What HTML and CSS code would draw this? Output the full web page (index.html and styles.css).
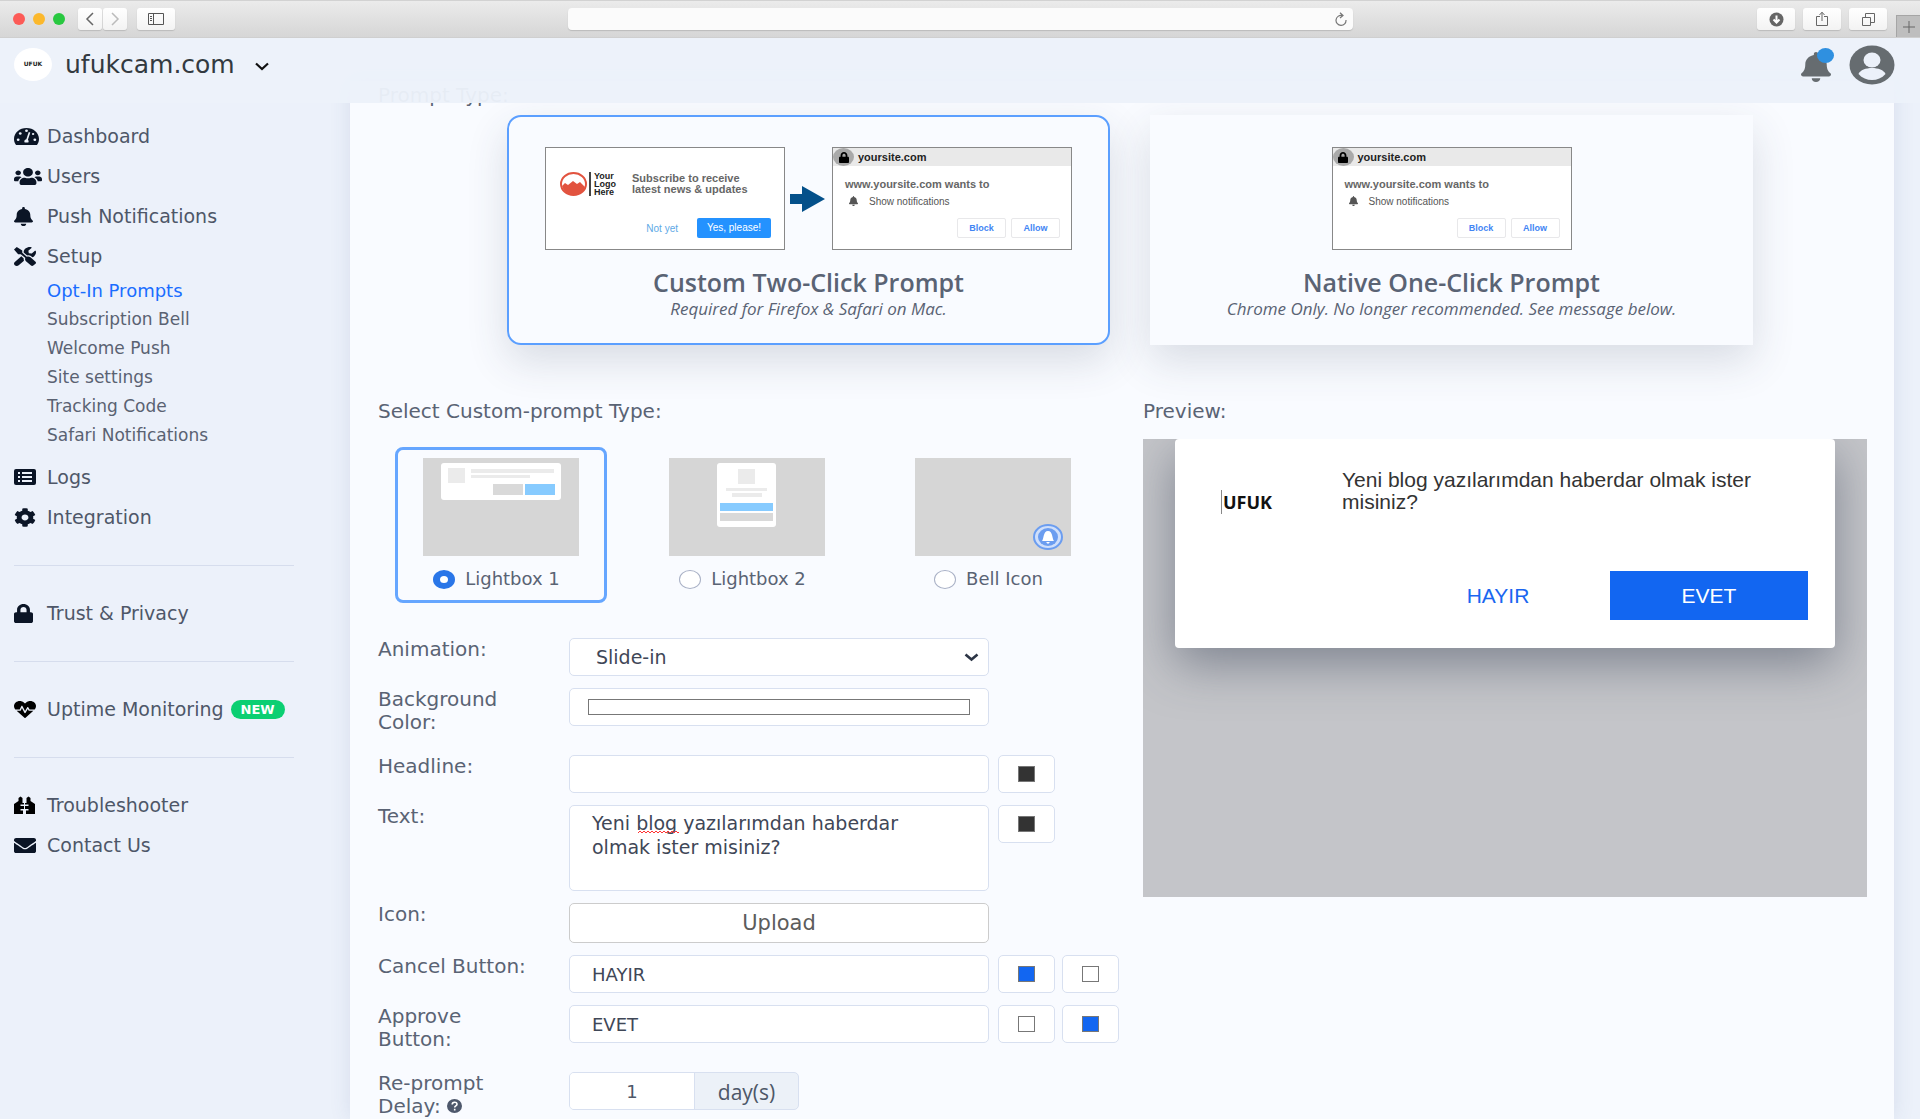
FILE: index.html
```html
<!DOCTYPE html>
<html lang="en">
<head>
<meta charset="utf-8">
<title>Opt-In Prompts</title>
<link rel="stylesheet" href="styles.css">
</head>
<body>
<svg class="sprite" aria-hidden="true">
  <symbol id="bell" viewBox="0 0 448 512" preserveAspectRatio="none"><path d="M224 512c35.32 0 63.97-28.65 63.97-64H160.03c0 35.35 28.65 64 63.97 64zm215.39-149.71c-19.32-20.76-55.47-51.99-55.47-154.29 0-77.7-54.48-139.9-127.94-155.16V32c0-17.67-14.32-32-31.98-32s-31.98 14.33-31.98 32v20.84C118.56 68.1 64.08 130.3 64.08 208c0 102.3-36.15 133.53-55.47 154.29-6 6.45-8.66 14.16-8.61 21.71.11 16.4 12.98 32 32.1 32h383.8c19.12 0 32-15.6 32.1-32 .05-7.55-2.61-15.27-8.61-21.71z"/></symbol>
  <symbol id="lock" viewBox="0 0 448 512" preserveAspectRatio="none"><path d="M400 224h-24v-72C376 68.2 307.8 0 224 0S72 68.2 72 152v72H48c-26.5 0-48 21.5-48 48v192c0 26.5 21.5 48 48 48h352c26.5 0 48-21.5 48-48V272c0-26.5-21.5-48-48-48zm-104 0H152v-72c0-39.7 32.3-72 72-72s72 32.3 72 72v72z"/></symbol>
</svg>

<div class="browser">
  <span class="light red"></span><span class="light amber"></span><span class="light green"></span>
  <div class="history">
    <button class="tool half" aria-label="Back"><svg width="10" height="14" viewBox="0 0 10 14"><path d="M8 1 2 7l6 6" fill="none" stroke="#666" stroke-width="1.500"/></svg></button>
    <button class="tool half" aria-label="Forward"><svg width="10" height="14" viewBox="0 0 10 14"><path d="m2 1 6 6-6 6" fill="none" stroke="#bbb" stroke-width="1.500"/></svg></button>
  </div>
  <button class="tool" aria-label="Show sidebar"><svg width="16" height="12" viewBox="0 0 16 12"><path d="M.5.5h15v11H.5zM5.500.5v11M2 3.500h2M2 5.500h2M2 7.500h2" fill="none" stroke="#555"/></svg></button>
  <div class="address"><input type="text" aria-label="Address"><svg class="reload" width="12" height="14" viewBox="0 0 12 14"><path d="M7 3.500A5 5 0 1 0 11 8M5 .8 8 3.500 5 6" fill="none" stroke="#777" stroke-width="1.200"/></svg></div>
  <div class="tools">
    <button class="tool" aria-label="Downloads"><svg width="15" height="15" viewBox="0 0 15 15"><circle cx="7.500" cy="7.500" r="7" fill="#666"/><path d="M7.500 3.500v6M4.500 7.500l3 3 3-3" fill="none" stroke="#fff" stroke-width="2"/></svg></button>
    <button class="tool" aria-label="Share"><svg width="12" height="16" viewBox="0 0 12 16"><path d="M4 5.500H.5v9h11v-9H8M6 10V1.500M3.500 4 6 1.200 8.500 4" fill="none" stroke="#666"/></svg></button>
    <button class="tool" aria-label="Tabs"><svg width="13" height="13" viewBox="0 0 13 13"><path d="M.5 4.500h8v8h-8zM3.500 4V.5h9v9H9" fill="none" stroke="#666"/></svg></button>
  </div>
  <button class="new-tab" aria-label="New tab"><svg width="12" height="12" viewBox="0 0 12 12"><path d="M6 0v12M0 6h12" stroke="#666" fill="none"/></svg></button>
</div>

<header class="topbar">
  <span class="avatar">UFUK</span>
  <span class="site">ufukcam.com</span>
  <svg class="caret" width="16" height="9" viewBox="0 0 16 9"><path d="m2 1.500 6 5.500 6-5.500" fill="none" stroke="#111" stroke-width="2.200"/></svg>
  <div class="account">
    <div class="alerts"><svg width="30" height="30" fill="#666c70"><use href="#bell"/></svg><span class="dot"></span></div>
    <svg width="46" height="40" viewBox="0 0 46 40" preserveAspectRatio="none"><ellipse cx="23" cy="20" rx="22.500" ry="19.500" fill="#666c70"/><ellipse cx="23" cy="15" rx="8.500" ry="7.500" fill="#ecf1fa"/><path d="M9.500 29c3-8 24-8 27 0-7 8-20 8-27 0z" fill="#ecf1fa"/></svg>
  </div>
</header>

<div class="layout">
<nav class="sidebar">
  <a class="item" href="#"><span class="icon"><svg width="25" height="17" viewBox="0 32 576 448" preserveAspectRatio="none"><path d="M288 32C128.940 32 0 160.940 0 320c0 52.800 14.250 102.260 39.060 144.800 5.610 9.620 16.300 15.200 27.440 15.200h443c11.140 0 21.830-5.580 27.440-15.200C561.750 422.260 576 372.800 576 320c0-159.060-128.940-288-288-288z"/><g fill="#ecf1fa"><circle cx="288" cy="106" r="32"/><circle cx="144" cy="176" r="32"/><circle cx="96" cy="340" r="32"/><circle cx="480" cy="340" r="32"/><circle cx="440" cy="190" r="28"/><path d="m340 140 36 12-56 190c20 20 22 50 10 74h-84c-20-36-4-82 38-90z"/></g></svg></span>Dashboard</a>
  <a class="item" href="#"><span class="icon"><svg width="28" height="17" viewBox="0 32 640 448" preserveAspectRatio="none"><path d="M96 224c35.300 0 64-28.700 64-64s-28.700-64-64-64-64 28.700-64 64 28.700 64 64 64zm448 0c35.300 0 64-28.700 64-64s-28.700-64-64-64-64 28.700-64 64 28.700 64 64 64zm32 32h-64c-17.600 0-33.500 7.100-45.100 18.600 40.300 22.100 68.900 62 75.100 109.400h66c17.700 0 32-14.300 32-32v-32c0-35.300-28.700-64-64-64zm-256 0c61.900 0 112-50.100 112-112S381.900 32 320 32 208 82.100 208 144s50.100 112 112 112zm76.800 32h-8.300c-20.800 10-43.900 16-68.500 16s-47.600-6-68.500-16h-8.300C179.600 288 128 339.600 128 403.200V432c0 26.500 21.500 48 48 48h288c26.500 0 48-21.500 48-48v-28.800c0-63.600-51.600-115.200-115.200-115.200zm-223.700-13.400C161.500 263.100 145.600 256 128 256H64c-35.300 0-64 28.700-64 64v32c0 17.700 14.300 32 32 32h65.900c6.300-47.400 34.900-87.300 75.200-109.400z"/></svg></span>Users</a>
  <a class="item" href="#"><span class="icon"><svg width="19" height="19"><use href="#bell"/></svg></span>Push Notifications</a>
  <a class="item" href="#"><span class="icon"><svg width="22" height="19" viewBox="0 0 512 512" preserveAspectRatio="none"><path d="M501.100 395.700L384 278.600c-23.100-23.100-57.600-27.600-85.400-13.900L192 158.100V96L64 0 0 64l96 128h62.100l106.600 106.600c-13.600 27.800-9.200 62.300 13.900 85.400l117.100 117.100c14.600 14.600 38.200 14.600 52.700 0l52.700-52.700c14.500-14.600 14.500-38.200 0-52.700zM331.700 225c28.300 0 54.900 11 74.900 31l19.400 19.400c15.800-6.900 30.800-16.500 43.800-29.500 37.100-37.100 49.700-89.300 37.900-136.700-2.200-9-13.500-12.100-20.100-5.500l-74.400 74.400-67.900-11.300L334 98.900l74.400-74.400c6.600-6.600 3.400-17.900-5.700-20.200-47.400-11.700-99.600.9-136.600 37.900-28.500 28.500-41.900 66.100-41.200 103.600l82.100 82.100c8.100-1.900 16.500-2.900 24.700-2.900zm-103.900 82l-56.700-56.700L18.700 402.800c-25 25-25 65.500 0 90.500s65.500 25 90.500 0l123.600-123.600c-7.600-19.900-9.900-41.600-5-62.700z"/></svg></span>Setup</a>
  <div class="submenu">
    <a class="current" href="#">Opt-In Prompts</a>
    <a href="#">Subscription Bell</a>
    <a href="#">Welcome Push</a>
    <a href="#">Site settings</a>
    <a href="#">Tracking Code</a>
    <a href="#">Safari Notifications</a>
  </div>
  <a class="item" href="#"><span class="icon"><svg width="22" height="16" viewBox="0 0 22 16"><rect width="22" height="16" rx="2"/><path d="M4 4h2M8 4h10M4 8h2M8 8h10M4 12h2M8 12h10" stroke="#ecf1fa" stroke-width="2"/></svg></span>Logs</a>
  <a class="item" href="#"><span class="icon"><svg width="22" height="19" viewBox="0 0 512 512" preserveAspectRatio="none"><path d="M487.400 315.700l-42.600-24.600c4.300-23.200 4.300-47 0-70.200l42.600-24.600c4.900-2.800 7.100-8.600 5.500-14-11.100-35.600-30-67.800-54.700-94.600-3.800-4.100-10-5.100-14.800-2.300L380.800 110c-17.900-15.400-38.500-27.300-60.800-35.100V25.800c0-5.600-3.900-10.500-9.400-11.700-36.700-8.200-74.300-7.800-109.200 0-5.500 1.200-9.400 6.100-9.400 11.700V75c-22.200 7.900-42.800 19.800-60.800 35.100L88.700 85.500c-4.900-2.800-11-1.900-14.800 2.300-24.700 26.700-43.600 58.900-54.700 94.600-1.700 5.400.6 11.200 5.500 14L67.300 221c-4.300 23.200-4.300 47 0 70.200l-42.600 24.600c-4.900 2.800-7.100 8.600-5.500 14 11.100 35.600 30 67.800 54.700 94.600 3.800 4.100 10 5.100 14.800 2.300l42.600-24.600c17.900 15.400 38.500 27.300 60.800 35.100v49.200c0 5.600 3.900 10.500 9.400 11.700 36.700 8.200 74.300 7.800 109.200 0 5.500-1.200 9.400-6.100 9.400-11.700v-49.200c22.200-7.900 42.800-19.800 60.800-35.100l42.600 24.600c4.900 2.800 11 1.900 14.800-2.300 24.700-26.700 43.600-58.900 54.700-94.600 1.500-5.500-.7-11.300-5.600-14.100zM256 336c-44.100 0-80-35.900-80-80s35.900-80 80-80 80 35.900 80 80-35.900 80-80 80z"/></svg></span>Integration</a>
  <hr>
  <a class="item" href="#"><span class="icon"><svg width="19" height="19"><use href="#lock"/></svg></span>Trust &amp; Privacy</a>
  <hr>
  <a class="item" href="#"><span class="icon"><svg class="black" width="22" height="17" viewBox="0 32 512 448" preserveAspectRatio="none"><path d="M320.200 243.800l-49.700 99.400c-6 12.100-23.400 11.700-28.900-.6l-56.900-126.300-30 71.700H60.600l182.500 186.500c7.100 7.300 18.600 7.300 25.700 0L451.400 288H342.300l-22.100-44.200zM473.700 73.900l-2.400-2.500c-51.500-52.600-135.800-52.600-187.400 0L256 100l-27.900-28.500c-51.500-52.700-135.900-52.700-187.400 0l-2.400 2.400C-10.400 123.700-12.500 203 31 256h102.400l35.900-86.200c5.400-12.900 23.600-13.100 29.300-.4l58.200 129.300 49-97.900c5.900-11.800 22.700-11.800 28.600 0l27.600 55.200H481c43.500-53 41.400-132.300-7.300-182.100z"/></svg></span>Uptime Monitoring<span class="badge">NEW</span></a>
  <hr>
  <a class="item" href="#"><span class="icon"><svg class="black" width="21" height="18" viewBox="0 0 21 18"><path d="M4.500 2 6.500.5 8.500 2v5H10v1.500H6.500v1.500H10v3H6.500v1.500H9V18H0V8l4.500-3zM16.500 2l-2-1.500-2 1.500v5H11v1.500h3.500v1.500H11v3h3.500v1.500H12V18h9V8l-4.500-3z"/></svg></span>Troubleshooter</a>
  <a class="item" href="#"><span class="icon"><svg width="22" height="15" viewBox="0 64 512 384" preserveAspectRatio="none"><path d="M502.300 190.800c3.900-3.100 9.700-.2 9.700 4.700V400c0 26.500-21.500 48-48 48H48c-26.500 0-48-21.500-48-48V195.600c0-5 5.700-7.800 9.700-4.700 22.400 17.400 52.100 39.500 154.100 113.600 21.100 15.400 56.700 47.800 92.200 47.600 35.700.3 72-32.800 92.300-47.600 102-74.100 131.600-96.300 154-113.700zM256 320c23.200.4 56.600-29.200 73.400-41.400 132.700-96.300 142.800-104.700 173.400-128.700 5.800-4.500 9.200-11.500 9.200-18.900v-19c0-26.500-21.500-48-48-48H48c-26.500 0-48 21.500-48 48v19c0 7.400 3.400 14.300 9.200 18.900 30.600 23.900 40.700 32.400 173.400 128.700 16.800 12.200 50.200 41.800 73.400 41.400z"/></svg></span>Contact Us</a>
</nav>

<main class="panel">
  <p class="label">Prompt Type:</p>
  <div class="prompts">
    <section class="prompt selected">
      <div class="mocks">
        <div class="mock subscribe">
          <div class="pitch">
            <svg width="27" height="24" viewBox="0 0 27 24"><ellipse cx="13.500" cy="12" rx="12.500" ry="11" fill="#fff" stroke="#e2533f" stroke-width="2"/><path d="m2 14 3-3 3 2 5-4 4 3 3-2 5 5c-2 10-20 11-23-1z" fill="#e2533f"/></svg>
            <strong class="your-logo">Your<br>Logo<br>Here</strong>
            <strong class="words">Subscribe to receive<br>latest news &amp; updates</strong>
          </div>
          <div class="choices"><span class="not-yet">Not yet</span><span class="yes">Yes, please!</span></div>
        </div>
        <svg class="arrow" width="35" height="26" viewBox="0 0 35 26"><path d="M0 8h12V0l23 13-23 13v-8H0z" fill="#04508a"/></svg>
        <div class="mock native">
          <div class="host"><span class="secure"><svg width="10" height="11"><use href="#lock"/></svg></span>yoursite.com</div>
          <strong class="wants">www.yoursite.com wants to</strong>
          <div class="show"><svg width="9" height="10" fill="#555"><use href="#bell"/></svg>Show notifications</div>
          <div class="answers"><span>Block</span><span>Allow</span></div>
        </div>
      </div>
      <h2>Custom Two-Click Prompt</h2>
      <em>Required for Firefox &amp; Safari on Mac.</em>
    </section>
    <section class="prompt">
      <div class="mocks single">
        <div class="mock native">
          <div class="host"><span class="secure"><svg width="10" height="11"><use href="#lock"/></svg></span>yoursite.com</div>
          <strong class="wants">www.yoursite.com wants to</strong>
          <div class="show"><svg width="9" height="10" fill="#555"><use href="#bell"/></svg>Show notifications</div>
          <div class="answers"><span>Block</span><span>Allow</span></div>
        </div>
      </div>
      <h2>Native One-Click Prompt</h2>
      <em>Chrome Only. No longer recommended. See message below.</em>
    </section>
  </div>

  <div class="columns">
    <form class="settings">
      <p class="label">Select Custom-prompt Type:</p>
      <div class="types">
        <label class="type selected">
          <svg width="156" height="98" viewBox="0 0 156 98"><path fill="#d6d6d6" d="M0 0h156v98H0z"/><rect x="18" y="5" width="120" height="37" rx="3" fill="#fff"/><path fill="#ebebeb" d="M25 10h17v15H25zM48 11h83v4H48zM48 17h59v3H48z"/><path fill="#d9d9d9" d="M70 26h30v11H70z"/><path fill="#87cbff" d="M102 26h30v11h-30z"/></svg>
          <span><input type="radio" name="type" checked>Lightbox 1</span>
        </label>
        <label class="type">
          <svg width="156" height="98" viewBox="0 0 156 98"><path fill="#d6d6d6" d="M0 0h156v98H0z"/><rect x="48" y="5" width="59" height="64" rx="3" fill="#fff"/><path fill="#ebebeb" d="M69 11h17v15H69zM57 30h41v3H57zM63 35h30v4H63z"/><path fill="#87cbff" d="M51 45h53v8H51z"/><path fill="#d9d9d9" d="M51 55h53v8H51z"/></svg>
          <span><input type="radio" name="type">Lightbox 2</span>
        </label>
        <label class="type">
          <svg width="156" height="98" viewBox="0 0 156 98"><path fill="#d6d6d6" d="M0 0h156v98H0z"/><ellipse cx="133" cy="79" rx="14" ry="12" fill="#cfdffb" stroke="#6b9df0" stroke-width="2"/><ellipse cx="133" cy="79" rx="10" ry="9" fill="#6b9df0"/><path d="M127 83c2-2 1-10 6-10s4 8 6 10zM131 84h4l-2 2z" fill="#fff"/></svg>
          <span><input type="radio" name="type">Bell Icon</span>
        </label>
      </div>

      <div class="row">
        <label for="animation">Animation:</label>
        <div class="select"><select id="animation" class="field"><option>Slide-in</option></select><svg width="15" height="9" viewBox="0 0 15 9"><path d="m1.500 1.500 6 5 6-5" fill="none" stroke="#2c3545" stroke-width="2.600"/></svg></div>
      </div>
      <div class="row tall">
        <label for="background">Background<br>Color:</label>
        <input id="background" class="field color wide" type="color" value="#ffffff">
      </div>
      <div class="row">
        <label for="headline">Headline:</label>
        <input id="headline" class="field" type="text">
        <input class="color" type="color" value="#333333" aria-label="Headline color">
      </div>
      <div class="row">
        <label for="text">Text:</label>
        <div class="message"><textarea id="text" class="field" spellcheck="false">Yeni blog yazılarımdan haberdar olmak ister misiniz?</textarea><svg class="typo" width="43" height="4" viewBox="0 0 43 4"><path d="m0 3 2-2 2 2 2-2 2 2 2-2 2 2 2-2 2 2 2-2 2 2 2-2 2 2 2-2 2 2 2-2 2 2 2-2 2 2 2-2 2 2 1-1" fill="none" stroke="#f33"/></svg></div>
        <input class="color" type="color" value="#333333" aria-label="Text color">
      </div>
      <div class="row">
        <label for="upload">Icon:</label>
        <button id="upload" class="upload" type="button">Upload</button>
      </div>
      <div class="row">
        <label for="cancel">Cancel Button:</label>
        <input id="cancel" class="field caps" type="text" value="HAYIR">
        <input class="color" type="color" value="#1266f1" aria-label="Cancel text color">
        <input class="color" type="color" value="#ffffff" aria-label="Cancel background">
      </div>
      <div class="row tall">
        <label for="approve">Approve<br>Button:</label>
        <input id="approve" class="field caps" type="text" value="EVET">
        <input class="color" type="color" value="#ffffff" aria-label="Approve text color">
        <input class="color" type="color" value="#1266f1" aria-label="Approve background">
      </div>
      <div class="row last">
        <label for="delay">Re-prompt<br>Delay: <svg width="15" height="14" viewBox="0 0 15 14"><ellipse cx="7.500" cy="7" rx="7.500" ry="7" fill="#4e586c"/><path d="M5.200 5.500c0-3 4.800-3 4.800-.3 0 1.800-2.300 1.600-2.300 3.300M7.700 9.800v1.700" fill="none" stroke="#fff" stroke-width="1.600"/></svg></label>
        <div class="delay"><input id="delay" type="text" value="1"><span>day(s)</span></div>
      </div>
    </form>

    <section class="preview">
      <p class="label">Preview:</p>
      <div class="stage">
        <div class="popup">
          <div class="popup-body">
            <div class="brand"><span>UFUK</span></div>
            <p>Yeni blog yazılarımdan haberdar olmak ister misiniz?</p>
          </div>
          <div class="popup-actions">
            <button class="deny">HAYIR</button>
            <button class="accept">EVET</button>
          </div>
        </div>
      </div>
    </section>
  </div>
</main>
</div>
</body>
</html>
```
FILE: styles.css
```css
* { box-sizing: border-box; }

body {
  display: flex;
  flex-direction: column;
  margin: 0;
  min-height: 100vh;
  background: #ecf1fa;
  color: #4e5768;
  font-family: "DejaVu Sans", sans-serif;
  font-size: 19px;
}

p, h2 { margin: 0; }
button, input, select, textarea { font: inherit; color: inherit; margin: 0; }
a { color: inherit; text-decoration: none; }
svg { flex: none; }
.sprite { position: absolute; width: 0; height: 0; }

/* Browser chrome */
.browser {
  display: flex;
  flex: none;
  align-items: center;
  height: 38px;
  padding-left: 13px;
  border-top: 1px solid #d2d2d2;
  border-bottom: 1px solid #cfcfcf;
  background: linear-gradient(#ebebeb, #d6d6d6);
}
.light { width: 12px; height: 12px; margin-right: 8px; border-radius: 50%; }
.red { background: #fc5b57; }
.amber { background: #fbb82c; }
.green { background: #28c840; }
.history { display: flex; gap: 1px; margin: 0 10px 0 5px; }
.tool {
  display: flex;
  align-items: center;
  justify-content: center;
  width: 38px;
  height: 22px;
  padding: 0;
  border: 0;
  border-radius: 3px;
  background: linear-gradient(#fff, #f3f3f3);
  box-shadow: 0 1px 1px #bbb;
}
.half { width: 24px; }
.address { position: relative; width: 785px; height: 22px; margin: 0 auto; }
.address input {
  display: block;
  width: 100%;
  height: 22px;
  border: 0;
  border-radius: 4px;
  background: #fbfbfb;
  box-shadow: 0 1px 1px #bbb;
}
.reload { position: absolute; right: 6px; top: 4px; }
.tools { display: flex; gap: 8px; margin: 0 9px 0 12px; }
.new-tab {
  align-self: flex-end;
  display: flex;
  align-items: center;
  justify-content: center;
  width: 24px;
  height: 22px;
  padding: 0;
  border: 1px solid #a5a5a5;
  border-width: 1px 0 0 1px;
  background: #bebebe;
}

/* Site header */
.topbar {
  position: relative;
  z-index: 2;
  display: flex;
  flex: none;
  align-items: center;
  height: 65px;
  padding: 0 25px 12px 14px;
  background: rgba(236, 241, 250, 0.96);
}
.avatar {
  width: 38px;
  height: 33px;
  margin-right: 13px;
  border-radius: 50%;
  background: #fff;
  color: #222;
  font: bold 6px/31px "DejaVu Sans", sans-serif;
  text-align: center;
}
.site { margin-right: 19px; color: #333a40; font-size: 25px; }
.caret { margin-top: 4px; }
.account { display: flex; align-items: center; gap: 18px; margin-left: auto; }
.alerts { position: relative; display: flex; padding-top: 4px; }
.dot {
  position: absolute;
  right: -3px;
  top: 0;
  width: 17px;
  height: 15px;
  border-radius: 50%;
  background: #2f90e0;
}

/* Sidebar */
.layout { display: flex; flex: 1; }
.sidebar { flex: none; width: 350px; padding: 13px 56px 40px 14px; }
.item { display: flex; align-items: center; height: 40px; white-space: nowrap; }
.icon { display: flex; flex: none; width: 33px; }
.sidebar svg { fill: #0b1526; }
.sidebar .black { fill: #000; }
.submenu { display: flex; flex-direction: column; margin-bottom: 7px; padding-left: 33px; }
.submenu a { color: #5a6272; font-size: 17px; line-height: 29px; }
.submenu .current { color: #1a6dff; font-size: 18px; }
.sidebar hr { height: 1px; margin: 28px 0 27px; border: 0; background: #d6dded; }
.badge {
  margin-left: 7px;
  padding: 0 10px;
  border-radius: 10px;
  background: #0bcf72;
  color: #fff;
  font: bold 13px/19px "DejaVu Sans", sans-serif;
}

/* Main panel slides under the header */
.panel {
  flex: 1;
  min-width: 0;
  margin: -22px 26px 0 0;
  padding: 3px 27px 0 28px;
  background: #f9fbff;
  box-shadow: 0 0 20px rgba(60, 80, 140, 0.12);
}
.label { color: #5a6374; font-size: 20px; line-height: 23px; }

.prompts { display: flex; gap: 40px; margin: 8px 114px 0 129px; }
.prompt {
  display: flex;
  flex: 1;
  flex-direction: column;
  align-items: center;
  height: 230px;
  padding: 30px 0 0;
  border: 2px solid transparent;
  background: #f9fbff;
  box-shadow: 0 16px 40px rgba(50, 60, 90, 0.16);
  color: #5a6374;
  font-family: "Open Sans", sans-serif;
}
.prompt.selected { border-color: #5b9fff; border-radius: 14px; }
.prompt h2 { margin-top: 15px; font-size: 25px; font-weight: 600; line-height: 34px; }
.prompt em { font-size: 17px; line-height: 20px; }
.mocks { display: flex; align-items: center; }
.arrow { margin: 0 7px 0 5px; }
.mock {
  width: 240px;
  height: 103px;
  border: 1px solid #888;
  background: #fff;
  font: 10px/11px "Liberation Sans", sans-serif;
}
.subscribe { padding: 24px 13px 0 14px; }
.pitch { display: flex; align-items: center; white-space: nowrap; }
.your-logo { margin: 0 16px 0 2px; padding-left: 3px; border-left: 2px solid #444; color: #222; font-size: 9px; line-height: 8px; }
.words { color: #666; font-size: 11px; }
.choices { display: flex; align-items: center; justify-content: flex-end; gap: 19px; margin-top: 22px; color: #5ea9e6; }
.yes { width: 74px; border-radius: 2px; background: #2492ff; color: #fff; line-height: 20px; text-align: center; }
.host { display: flex; align-items: center; gap: 4px; height: 18px; background: #e9e9e9; color: #222; font-size: 11px; font-weight: bold; }
.secure { display: flex; align-items: center; justify-content: center; width: 21px; height: 18px; border-radius: 50%; background: #a9a9a9; }
.wants { display: block; margin: 13px 0 6px 12px; color: #666; font-size: 11px; }
.show { display: flex; gap: 11px; margin-left: 16px; color: #555; }
.answers { display: flex; justify-content: flex-end; gap: 5px; margin: 11px 11px 0 0; color: #4285f4; font-size: 9px; font-weight: bold; }
.answers span { width: 49px; border: 1px solid #e8e8ea; border-radius: 2px; line-height: 18px; text-align: center; }

/* Form and preview columns */
.columns { display: grid; grid-template-columns: 765fr 724fr; margin-top: 55px; }
.types { display: flex; gap: 34px; margin: 24px 0 35px 17px; }
.type {
  display: flex;
  flex-direction: column;
  align-items: center;
  width: 212px;
  height: 156px;
  padding-top: 8px;
  border: 3px solid transparent;
  border-radius: 8px;
  color: #5a6374;
  font-size: 18px;
}
.type.selected { border-color: #66a6ff; }
.type span { display: flex; align-items: center; margin: 12px 9px 0 0; line-height: 22px; }
.type input {
  appearance: none;
  width: 22px;
  height: 19px;
  margin-right: 10px;
  border: 1px solid #a9b1c6;
  border-radius: 50%;
  background: #fff;
}
.type input:checked { border: 6px solid #2a76e8; border-width: 6px 7px; }

.row { display: flex; align-items: flex-start; margin-bottom: 12px; }
.row > label { width: 191px; color: #5a6374; font-size: 20px; line-height: 23px; }
.row.tall > label { padding-bottom: 9px; }
.row.last { margin-bottom: 0; }
.field, .color, .upload {
  border: 1px solid #d8e0f0;
  border-radius: 5px;
  background: #fff;
  color: #3f4757;
}
.field { display: block; width: 420px; height: 38px; padding: 0 22px; }
.caps { font-size: 18px; }
select.field { appearance: none; padding-left: 26px; }
.select { position: relative; }
.select svg { position: absolute; right: 10px; top: 15px; }
textarea.field { height: 86px; padding: 5px 60px 0 22px; line-height: 24px; resize: none; overflow: hidden; }
.message { position: relative; }
.typo { position: absolute; left: 69px; top: 25px; }
.color { width: 57px; height: 38px; margin-left: 9px; padding: 10px 19px; }
.color + .color { margin-left: 7px; }
.color.wide { width: 420px; margin-left: 0; padding: 10px 18px; }
.color::-webkit-color-swatch-wrapper { padding: 0; }
.color::-webkit-color-swatch { border: 1px solid #777; border-radius: 0; }
.upload { width: 420px; height: 40px; border-color: #ccc; color: #5c5c5c; font-size: 21px; }
.delay { display: flex; width: 230px; height: 38px; border: 1px solid #d8e0f0; border-radius: 5px; background: #ecf1f8; overflow: hidden; }
.delay input { width: 125px; border: 0; border-right: 1px solid #d8e0f0; background: #fff; text-align: center; font-size: 18px; }
.delay span { flex: 1; font: 21px/38px "Open Sans", sans-serif; text-align: center; }

.stage { height: 458px; margin-top: 16px; padding: 0 32px; background: #c4c5c9; overflow: hidden; }
.popup {
  display: flex;
  flex-direction: column;
  justify-content: space-between;
  height: 209px;
  padding: 23px 27px 28px 34px;
  border-radius: 4px;
  background: #fff;
  box-shadow: 0 16px 48px rgba(60, 70, 90, 0.5);
  color: #333;
  font: 21px/22px "Liberation Sans", sans-serif;
}
.popup-body { display: flex; }
.popup p { flex: 1; padding: 7px 40px 0 0; }
.brand { width: 133px; padding: 30px 0 0 12px; color: #111; font: bold 18px/20px "Open Sans", sans-serif; }
.brand span { padding-left: 1px; border-left: 1px solid #888; }
.popup-actions { display: flex; justify-content: flex-end; gap: 14px; }
.popup-actions button { height: 49px; border: 0; }
.deny { width: 196px; background: none; color: #1a66f0; }
.accept { width: 198px; background: #1266f1; color: #fff; }
```
